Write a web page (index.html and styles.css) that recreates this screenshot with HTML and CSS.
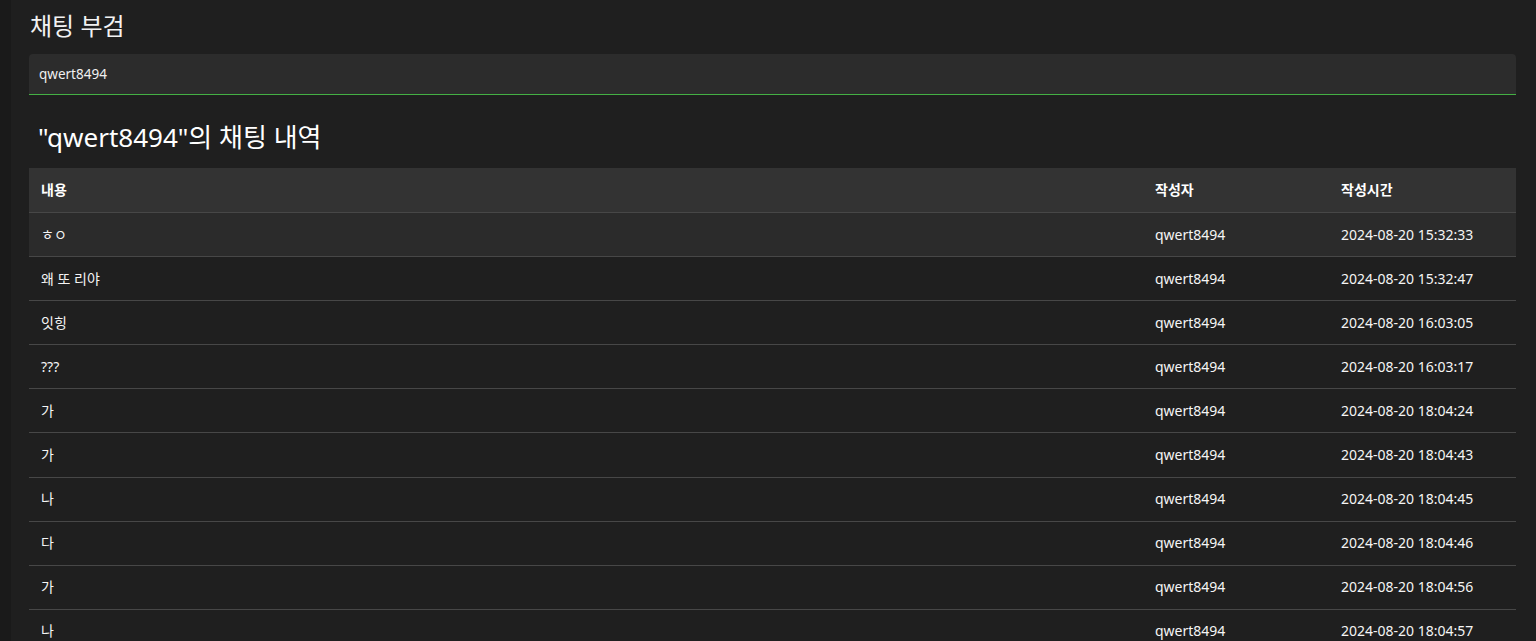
FILE: index.html
```html
<!DOCTYPE html>
<html lang="ko">
<head>
<meta charset="utf-8">
<title>채팅 부검</title>
<link rel="stylesheet" href="styles.css">
</head>
<body>
<div class="layout">
  <aside class="rail"></aside>
  <main class="main">
    <h1 class="title">채팅 부검</h1>
    <div class="search"><span class="search-text">qwert8494</span></div>
    <h2 class="subtitle">"qwert8494"의 채팅 내역</h2>
    <table class="chat-table">
      <thead>
        <tr><th>내용</th><th class="col-user">작성자</th><th class="col-time">작성시간</th></tr>
      </thead>
      <tbody>
        <tr class="hover"><td>ㅎㅇ</td><td>qwert8494</td><td>2024-08-20 15:32:33</td></tr>
        <tr><td>왜 또 리야</td><td>qwert8494</td><td>2024-08-20 15:32:47</td></tr>
        <tr><td>잇힝</td><td>qwert8494</td><td>2024-08-20 16:03:05</td></tr>
        <tr><td>???</td><td>qwert8494</td><td>2024-08-20 16:03:17</td></tr>
        <tr><td>가</td><td>qwert8494</td><td>2024-08-20 18:04:24</td></tr>
        <tr><td>가</td><td>qwert8494</td><td>2024-08-20 18:04:43</td></tr>
        <tr><td>나</td><td>qwert8494</td><td>2024-08-20 18:04:45</td></tr>
        <tr><td>다</td><td>qwert8494</td><td>2024-08-20 18:04:46</td></tr>
        <tr><td>가</td><td>qwert8494</td><td>2024-08-20 18:04:56</td></tr>
        <tr><td>나</td><td>qwert8494</td><td>2024-08-20 18:04:57</td></tr>
      </tbody>
    </table>
  </main>
</div>
</body>
</html>
```
FILE: styles.css
```css
html, body {
  margin: 0;
  padding: 0;
  background: #1f1f1f;
  color: #ffffff;
  font-family: "Noto Sans", "Noto Sans CJK KR", sans-serif;
  overflow: hidden;
}
.layout {
  display: flex;
  min-height: 641px;
}
.rail {
  width: 11px;
  flex: none;
  background: #1a1a1a;
}
.main {
  flex: 1;
  padding: 10px 20px 0 18px;
}
.title {
  margin: 0 0 12px 1px;
  font-size: 24px;
  font-weight: 400;
  line-height: 32px;
  color: #f2f2f2;
}
.search {
  height: 40px;
  background: #2c2c2c;
  border-bottom: 1px solid #44b044;
  border-radius: 4px 4px 0 0;
  display: flex;
  align-items: center;
  padding: 0 10px;
  font-size: 13.5px;
  color: #f0f0f0;
}
.subtitle {
  margin: 23px 0 12px 9px;
  font-size: 26px;
  font-weight: 400;
  line-height: 38px;
  color: #ffffff;
}
.chat-table {
  width: 100%;
  border-collapse: collapse;
  font-size: 14px;
  table-layout: fixed;
}
.chat-table th,
.chat-table td {
  text-align: left;
  padding: 11.55px 12px;
  line-height: 20px;
  border-bottom: 1px solid #474747;
  white-space: nowrap;
}
.chat-table th {
  background: #333333;
  font-weight: 700;
  font-size: 14px;
  padding-top: 12px;
  padding-bottom: 12px;
}
.chat-table td {
  font-size: 14px;
  color: #f5f5f5;
}
.col-user { width: 162px; }
.col-time { width: 163px; }
.chat-table tr.hover td {
  background: #2b2b2b;
}
```
